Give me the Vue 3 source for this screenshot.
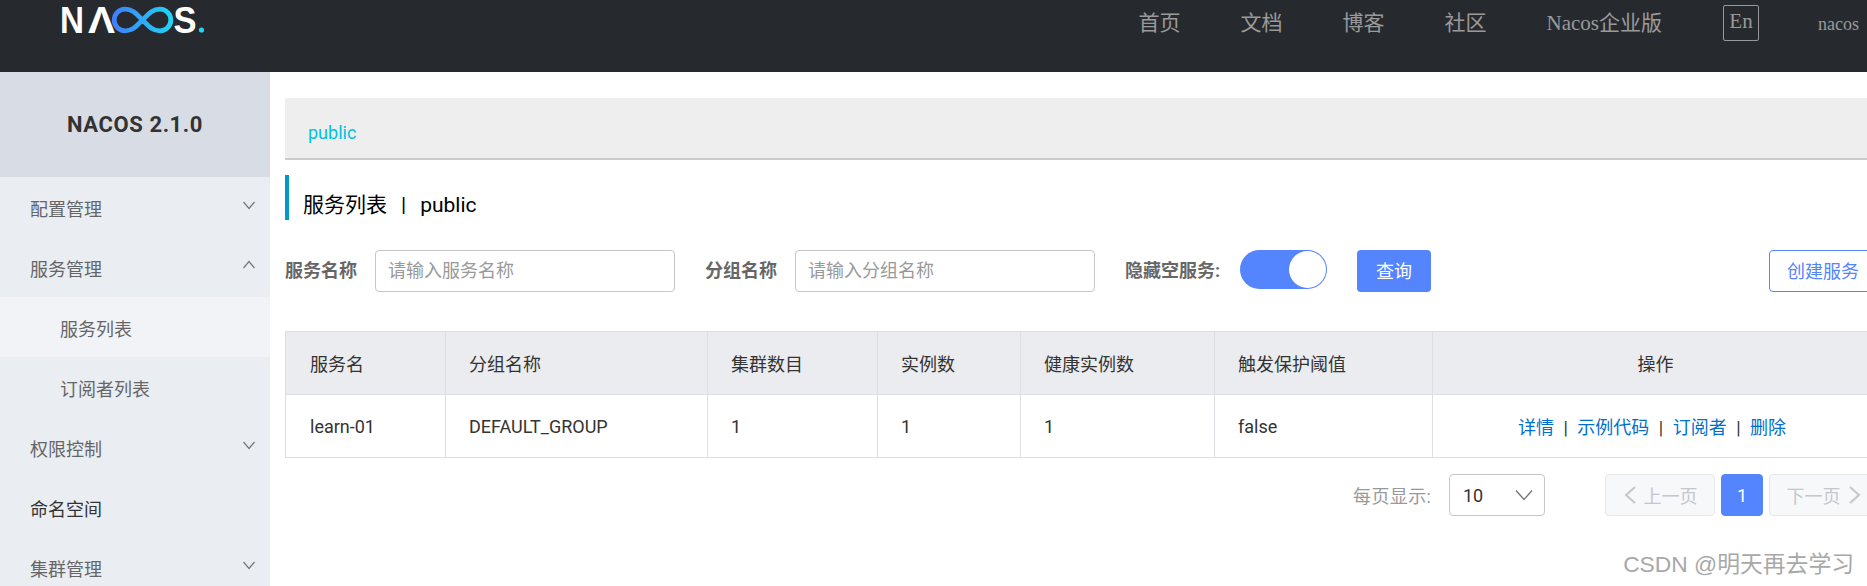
<script setup>
const navItems = ['首页', '文档', '博客', '社区', 'Nacos企业版']
const menu = [
  { label: '配置管理', arrow: 'down' },
  { label: '服务管理', arrow: 'up' },
  { label: '服务列表', sub: true, active: true },
  { label: '订阅者列表', sub: true },
  { label: '权限控制', arrow: 'down' },
  { label: '命名空间', dark: true },
  { label: '集群管理', arrow: 'down' }
]
const columns = ['服务名', '分组名称', '集群数目', '实例数', '健康实例数', '触发保护阈值', '操作']
const row = ['learn-01', 'DEFAULT_GROUP', '1', '1', '1', 'false']
const actions = ['详情', '示例代码', '订阅者', '删除']
const widths = [160, 262, 170, 143, 194, 218, 446]
</script>

<template>
  <div class="page">
    <header class="topbar">
      <svg class="logo" width="146" height="40" viewBox="0 0 146 40" aria-label="NACOS">
        <defs>
          <linearGradient id="inf" gradientUnits="userSpaceOnUse" x1="52" x2="113" y1="20" y2="20">
            <stop offset="0" stop-color="#3f7dfb" />
            <stop offset="1" stop-color="#1fd6f5" />
          </linearGradient>
        </defs>
        <text x="0" y="33" class="logo-t" textLength="24" lengthAdjust="spacingAndGlyphs">N</text>
        <text x="28" y="33" class="logo-t" textLength="27" lengthAdjust="spacingAndGlyphs">Λ</text>
        <path d="M65 9.2C74 9.2 78 16 82.5 20S91 30.8 100 30.8a10.8 10.8 0 0 0 0-21.6C91 9.2 87 16 82.5 20S74 30.8 65 30.8a10.8 10.8 0 0 1 0-21.6z" fill="none" stroke="url(#inf)" stroke-width="4.8" />
        <text x="113.5" y="33" class="logo-t" textLength="23" lengthAdjust="spacingAndGlyphs">S</text>
        <circle cx="141.5" cy="30" r="2.6" fill="#1fd6f5" />
      </svg>
      <nav class="nav">
        <a v-for="item in navItems" :key="item" class="nav-item">{{ item }}</a>
        <span class="lang">En</span>
        <span class="user">nacos</span>
      </nav>
    </header>

    <div class="body">
      <aside class="side">
        <div class="brand">NACOS 2.1.0</div>
        <div
          v-for="m in menu"
          :key="m.label"
          class="menu-item"
          :class="{ sub: m.sub, active: m.active, dark: m.dark }"
        >
          <span>{{ m.label }}</span>
          <svg v-if="m.arrow" class="chev" width="14" height="10" viewBox="0 0 14 10">
            <path :d="m.arrow === 'down' ? 'M1.5 2 7 8.5 12.5 2' : 'M1.5 8 7 1.5 12.5 8'" fill="none" stroke="#777" stroke-width="1.2" />
          </svg>
        </div>
      </aside>

      <main class="main">
        <div class="ns-bar"><span class="ns">public</span></div>
        <div class="title">服务列表<i class="sep">|</i>public</div>

        <div class="filters">
          <label class="f-label">服务名称</label>
          <div class="input">请输入服务名称</div>
          <label class="f-label second">分组名称</label>
          <div class="input">请输入分组名称</div>
          <label class="f-label third">隐藏空服务:</label>
          <div class="switch"><span class="knob"></span></div>
          <button class="btn primary">查询</button>
          <button class="btn outline">创建服务</button>
        </div>

        <table class="grid">
          <colgroup>
            <col v-for="w in widths" :key="w" :style="{ width: w + 'px' }" />
          </colgroup>
          <thead>
            <tr>
              <th v-for="(c, i) in columns" :key="c" :class="{ center: i === 6 }">{{ c }}</th>
            </tr>
          </thead>
          <tbody>
            <tr>
              <td v-for="(c, i) in row" :key="i">{{ c }}</td>
              <td class="center actions">
                <template v-for="(a, i) in actions" :key="a">
                  <a class="link">{{ a }}</a><span v-if="i < 3" class="bar">|</span>
                </template>
              </td>
            </tr>
          </tbody>
        </table>

        <div class="pager">
          <span class="per">每页显示:</span>
          <div class="select">
            <span>10</span>
            <svg width="20" height="12" viewBox="0 0 20 12">
              <path d="M2 1.5 10 10.5 18 1.5" fill="none" stroke="#777" stroke-width="1.4" />
            </svg>
          </div>
          <div class="pg prev">
            <svg width="14" height="20" viewBox="0 0 14 20"><path d="M12 2 3 10 12 18" fill="none" stroke="#c4c6cf" stroke-width="2" /></svg>
            <span>上一页</span>
          </div>
          <div class="pg cur">1</div>
          <div class="pg next">
            <span>下一页</span>
            <svg width="14" height="20" viewBox="0 0 14 20"><path d="M2 2 11 10 2 18" fill="none" stroke="#c4c6cf" stroke-width="2" /></svg>
          </div>
        </div>
      </main>
    </div>
    <div class="mark">CSDN @明天再去学习</div>
  </div>
</template>

<style>
html, body { margin: 0; overflow: hidden; background: #fff; }
</style>

<style scoped>
.page {
  position: relative;
  width: 1867px;
  height: 586px;
  overflow: hidden;
  font-family: "Roboto", "Noto Sans CJK SC", sans-serif;
  font-size: 18px;
  color: #333;
}
.topbar {
  height: 72px;
  background: #262a2f;
  display: flex;
  justify-content: space-between;
  padding-left: 60px;
  box-sizing: border-box;
}
.logo { display: block; }
.logo-t { font-family: "Liberation Sans", sans-serif; font-weight: 700; font-size: 36px; fill: #fff; }
.nav {
  display: flex;
  align-items: flex-start;
  font-family: "Liberation Serif", "Noto Sans CJK SC", serif;
  color: #9a9a9a;
  font-size: 21px;
  padding-right: 8px;
}
.nav-item { margin-right: 60px; margin-top: 8px; line-height: 30px; }
.nav-item:nth-child(5) { margin-right: 61px; }
.lang {
  box-sizing: border-box;
  width: 36px;
  height: 36px;
  margin-top: 5px;
  margin-right: 59px;
  border: 1px solid #999;
  border-radius: 2px;
  text-align: center;
  line-height: 30px;
}
.user { font-size: 18px; margin-top: 9px; line-height: 30px; }

.body { display: flex; height: 514px; }
.side { width: 270px; flex: none; background: #eaedf1; color: #666; }
.brand {
  height: 105px;
  background: #d8dde5;
  display: flex;
  align-items: center;
  justify-content: center;
  font-weight: 700;
  font-size: 22px;
  letter-spacing: 0.6px;
  color: #333;
}
.menu-item {
  height: 60px;
  box-sizing: border-box;
  display: flex;
  align-items: center;
  justify-content: space-between;
  padding: 2px 14px 0 30px;
}
.menu-item.sub { padding-left: 60px; }
.menu-item.active { background: #f2f3f7; }
.menu-item.dark { color: #333; }
.chev { display: block; margin-top: -6px; }

.main { flex: 1; min-width: 0; padding: 26px 0 0 15px; }
.ns-bar {
  height: 62px;
  box-sizing: border-box;
  background: #eee;
  border-bottom: 2px solid #ccc;
  padding: 23px 0 0 23px;
  width: 1590px;
}
.ns { color: #00c1de; line-height: 24px; display: block; }
.title {
  margin-top: 15px;
  height: 45px;
  box-sizing: border-box;
  border-left: 4px solid #09c;
  padding-left: 14px;
  font-size: 21px;
  line-height: 60px;
  color: #000;
  white-space: nowrap;
}
.sep { font-style: normal; margin: 0 14px; }

.filters {
  margin-top: 30px;
  height: 42px;
  display: flex;
  align-items: flex-start;
  width: 1620px;
}
.filters > * { flex: none; }
.f-label { font-weight: 700; color: #666; line-height: 42px; width: 90px; }
.f-label.second { margin-left: 30px; }
.f-label.third { margin-left: 30px; width: 115px; }
.input {
  box-sizing: border-box;
  width: 300px;
  height: 42px;
  border: 1px solid #c4c6cf;
  border-radius: 4px;
  padding-left: 12px;
  line-height: 40px;
  color: #999;
}
.switch {
  width: 87px;
  height: 39px;
  box-sizing: border-box;
  background: #5584ff;
  border-radius: 20px;
  position: relative;
}
.knob {
  position: absolute;
  right: 1px;
  top: 1px;
  width: 37px;
  height: 37px;
  border-radius: 50%;
  background: #fff;
}
.btn {
  font: inherit;
  height: 42px;
  box-sizing: border-box;
  border-radius: 4px;
  padding: 0 0 2px;
  white-space: nowrap;
}
.primary {
  width: 74px;
  margin-left: 30px;
  background: #5584ff;
  border: 0;
  color: #fff;
}
.outline {
  width: 120px;
  margin-left: 338px;
  background: #fff;
  border: 1px solid #5584ff;
  color: #5584ff;
  text-align: left;
  padding-left: 17px;
}

.grid {
  margin-top: 39px;
  border-collapse: collapse;
  table-layout: fixed;
  width: 1593px;
  color: #333;
}
.grid th, .grid td {
  height: 63px;
  box-sizing: border-box;
  border: 1px solid #dcdee3;
  padding: 0 0 0 23px;
  text-align: left;
  font-weight: 400;
}
.grid th:first-child, .grid td:first-child { padding-left: 24px; }
.grid th { background: #ebecf0; }
.grid th.center, .grid td.center { text-align: center; padding: 0; }
.grid td.actions { padding-right: 7px; }
.link { color: #0070cc; }
.bar { margin: 0 9.5px; }

.pager {
  margin-top: 16px;
  height: 42px;
  display: flex;
  align-items: center;
  padding-left: 1068px;
  width: 600px;
}
.per { color: #999; width: 96px; flex: none; white-space: nowrap; letter-spacing: 0.4px; }
.select {
  box-sizing: border-box;
  flex: none;
  width: 96px;
  height: 42px;
  border: 1px solid #c4c6cf;
  border-radius: 4px;
  display: flex;
  align-items: center;
  justify-content: space-between;
  padding: 0 10px 0 13px;
}
.pg {
  box-sizing: border-box;
  height: 42px;
  flex: none;
  border-radius: 4px;
  border: 1px solid #e6e7eb;
  background: #f7f8fa;
  color: #c4c6cf;
  display: flex;
  align-items: center;
  justify-content: center;
  gap: 7px;
  white-space: nowrap;
}
.prev { width: 110px; margin-left: 60px; }
.cur { width: 42px; margin: 0 6px; background: #5584ff; border-color: #5584ff; color: #fff; }
.next { width: 110px; }
.mark {
  position: absolute;
  right: 13px;
  top: 549px;
  font-family: "Liberation Sans", "Noto Sans CJK SC", sans-serif;
  font-size: 22.8px;
  line-height: 30px;
  color: #a8a8a8;
}
</style>
